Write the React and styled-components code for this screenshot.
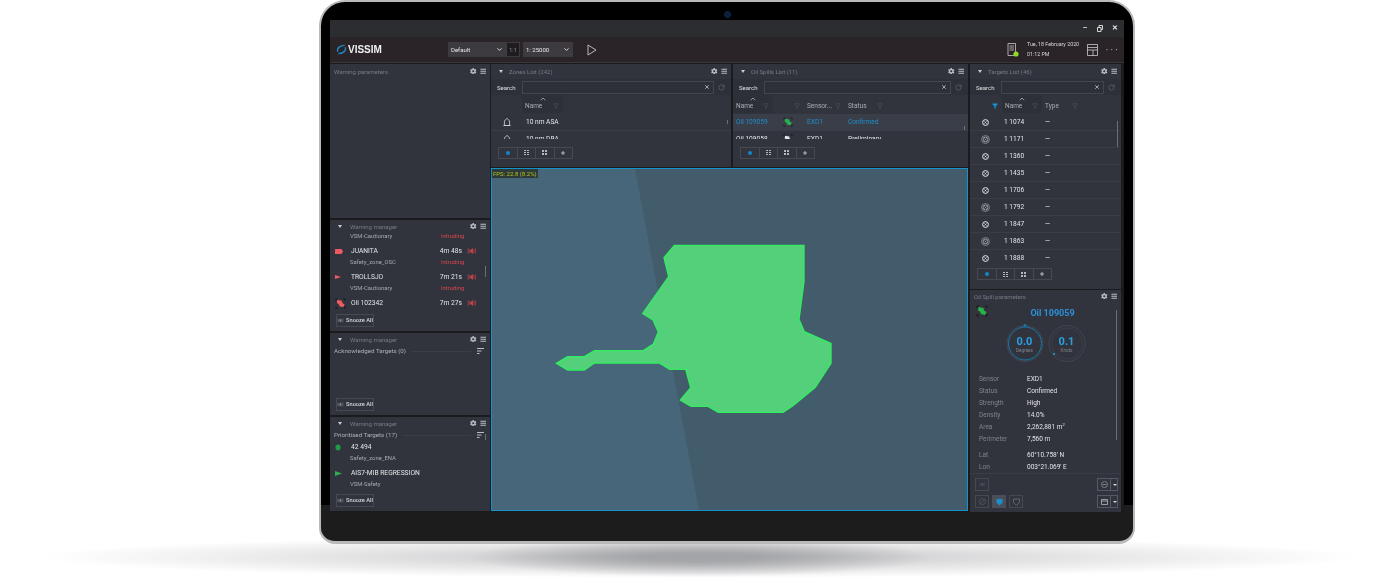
import styled, { createGlobalStyle } from 'styled-components';
import { ChevronDown, ChevronUp, Filter, RotateCw, X } from 'lucide-react';
import { FaBars, FaCog } from 'react-icons/fa';

const Global = createGlobalStyle`
  html, body {
    margin: 0;
    padding: 0;
    background: #fff;
    overflow: hidden;
    font-family: Roboto, "Liberation Sans", sans-serif;
  }
`;

const Page = styled.div`
  position: relative;
  width: 1400px;
  height: 579px;
  overflow: hidden;
`;

const FloorShadow = styled.div`
  position: absolute;
  left: 30px;
  top: 536px;
  width: 1340px;
  height: 42px;
  background:
    radial-gradient(ellipse 230px 20px at 50% 50%, rgba(150, 151, 155, 0.7) 25%, rgba(150, 151, 155, 0) 100%),
    radial-gradient(ellipse 660px 21px at 50% 50%, rgba(170, 171, 174, 0.75) 0%, rgba(190, 190, 193, 0.45) 50%, rgba(255, 255, 255, 0) 100%);
`;

const Tablet = styled.div`
  position: relative;
  box-sizing: border-box;
  width: 816px;
  height: 544px;
  margin-left: 319px;
  padding: 18px 9px 0;
  border: 2px solid #b9babc;
  border-bottom-width: 3px;
  border-radius: 26px 26px 16px 16px;
  background: linear-gradient(#000 0, #000 503px, #1c1c1c 503px);
`;

const Camera = styled.div`
  position: absolute;
  left: 403px;
  top: 9px;
  width: 5px;
  height: 5px;
  border-radius: 50%;
  background: #0c1f3a;
  border: 1px solid #10284c;
`;

const Screen = styled.div`
  width: 794px;
  height: 492px;
  display: flex;
  flex-direction: column;
  background: #1b1b1e;
  color: #e8e8ea;
  font-size: 6.5px;
  filter: blur(0.3px);
  overflow: hidden;
`;

const TitleStrip = styled.div`
  height: 17px;
  flex: none;
  background: #2c2d31;
  display: flex;
  align-items: center;
  justify-content: flex-end;
  gap: 9px;
  padding-right: 6px;
  color: #e6e6e6;
`;

const WinGlyph = styled.span`
  width: 6px;
  display: flex;
  justify-content: center;
  font-size: 7px;
  font-weight: 700;
  line-height: 1;
`;

const Toolbar = styled.div`
  height: 26px;
  flex: none;
  box-sizing: border-box;
  background: #2a2327;
  border-bottom: 1px solid #3a3537;
  display: flex;
  align-items: center;
  padding: 0 6px;
`;

const Logo = styled.div`
  width: 112px;
  display: flex;
  align-items: center;
  gap: 1px;
  font: 700 10px "Liberation Sans", sans-serif;
  color: #f1f1f1;
`;

const SelectBox = styled.div`
  box-sizing: border-box;
  width: ${(p) => p.$w}px;
  height: 15px;
  margin-right: ${(p) => p.$gap || 0}px;
  padding: 0 3px;
  display: flex;
  align-items: center;
  justify-content: space-between;
  background: #3d3a40;
  font-size: 6px;
`;

const RatioBox = styled.div`
  box-sizing: border-box;
  width: 14px;
  height: 15px;
  margin-right: 3px;
  display: flex;
  align-items: center;
  justify-content: center;
  background: #1f1c20;
  border: 1px solid #3d3a40;
  color: #8d8d90;
  font-size: 5.5px;
`;

const ToolbarRight = styled.div`
  margin-left: auto;
  display: flex;
  align-items: center;
`;

const DateText = styled.div`
  width: 60px;
  margin-left: 8px;
  font-size: 5.3px;
  line-height: 9.5px;
  color: #d8d8da;
`;

const Dots = styled.div`
  width: 12px;
  margin-left: 8px;
  font-size: 6px;
  letter-spacing: 0.6px;
  color: #b0b0b2;
  line-height: 1;
  white-space: nowrap;
`;

const Body = styled.div`
  flex: 1;
  min-height: 0;
  display: flex;
  gap: 1px;
  padding-top: 1px;
`;

const LeftColumn = styled.div`
  width: 160px;
  flex: none;
  display: flex;
  flex-direction: column;
  gap: 2px;
`;

const MiddleColumn = styled.div`
  width: 477px;
  flex: none;
  display: flex;
  flex-direction: column;
  gap: 1px;
  padding-bottom: 1px;
`;

const RightColumn = styled.div`
  width: 151px;
  margin-left: 1px;
  flex: none;
  display: flex;
  flex-direction: column;
  gap: 1px;
`;

const ListsRow = styled.div`
  display: flex;
  gap: 2px;
`;

const Panel = styled.section`
  box-sizing: border-box;
  position: relative;
  display: flex;
  flex-direction: column;
  height: ${(p) => p.$h}px;
  width: ${(p) => (p.$w ? `${p.$w}px` : 'auto')};
  background: #31343d;
  overflow: hidden;
`;

const PanelHeader = styled.header`
  height: ${(p) => (p.$compact ? 12 : 14)}px;
  flex: none;
  display: flex;
  align-items: center;
  padding: 0 4px 0 ${(p) => (p.$caret ? 6 : 4)}px;
  color: #777b84;
  font-size: 6px;
`;

const Caret = styled.span`
  width: 0;
  height: 0;
  margin: 0 ${(p) => (p.$wide ? 8 : 6)}px 0 2px;
  border-left: 2.5px solid transparent;
  border-right: 2.5px solid transparent;
  border-top: 3px solid #c9cbd0;
`;

const HeaderTools = styled.div`
  margin-left: auto;
  display: flex;
  align-items: center;
  gap: 3px;
  color: #b9bcc2;
`;

const SearchRow = styled.div`
  height: 16px;
  margin-top: 1px;
  flex: none;
  display: flex;
  align-items: center;
  padding: 0 6px;
  background: #2d3038;
  font-size: 6px;
  color: #dfe0e3;
`;

const SearchLabel = styled.span`
  width: 25px;
  flex: none;
`;

const SearchInput = styled.div`
  flex: 1;
  height: 13px;
  box-sizing: border-box;
  border: 1px solid #42464f;
  display: flex;
  align-items: center;
  justify-content: flex-end;
  padding-right: 3px;
  color: #c9cbd0;
`;

const RefreshWrap = styled.span`
  width: 11px;
  display: flex;
  justify-content: flex-end;
  color: #6d7078;
`;

const ColumnsRow = styled.div`
  height: 18px;
  margin-bottom: 1px;
  flex: none;
  display: flex;
  align-items: stretch;
  color: #a9acb3;
  font-size: 6.5px;
`;

const Column = styled.div`
  position: relative;
  width: ${(p) => p.$w}px;
  flex: none;
  display: flex;
  align-items: center;
  justify-content: space-between;
  box-sizing: border-box;
  padding: 3px 4px 0 3px;
  background: ${(p) => (p.$sorted ? '#2d3037' : 'transparent')};
`;

const SortMark = styled.span`
  position: absolute;
  left: 50%;
  top: 0;
  margin-left: -4px;
  display: flex;
  color: #c4c6cb;
`;

const Rows = styled.div`
  height: ${(p) => p.$h}px;
  flex: none;
  overflow: hidden;
  position: relative;
`;

const Row = styled.div`
  height: 17px;
  box-sizing: border-box;
  display: flex;
  align-items: center;
  border-bottom: 1px solid #3a3d46;
  background: ${(p) => (p.$active ? '#3a3e48' : 'transparent')};
  color: ${(p) => (p.$active ? '#1f8fcf' : '#e4e5e8')};
  font-size: 6.6px;
`;

const Cell = styled.div`
  width: ${(p) => p.$w}px;
  flex: none;
  display: flex;
  align-items: center;
  justify-content: ${(p) => (p.$center ? 'center' : 'flex-start')};
  padding-left: ${(p) => p.$pad || 0}px;
  box-sizing: border-box;
  white-space: nowrap;
`;

const Scrollbar = styled.div`
  position: absolute;
  right: ${(p) => p.$r}px;
  top: ${(p) => p.$t}px;
  width: 1.5px;
  height: ${(p) => p.$h}px;
  background: #6a6e77;
`;

const Tabs = styled.div`
  margin: ${(p) => p.$top}px 0 0 7px;
  display: flex;
  width: max-content;
  border: 1px solid #454952;
`;

const Tab = styled.div`
  width: 17.5px;
  height: 10px;
  display: flex;
  align-items: center;
  justify-content: center;
  border-left: ${(p) => (p.$first ? 'none' : '1px solid #454952')};
`;

const TabDot = styled.span`
  width: 4px;
  height: 4px;
  border-radius: 50%;
  background: #0f86c6;
`;

const MapView = styled.div`
  flex: 1;
  min-height: 0;
  box-sizing: border-box;
  position: relative;
  border: 1px solid #1592c9;
  background: #435c6b;
`;

const MapSvg = styled.svg`
  display: block;
  width: 100%;
  height: 100%;
`;

const Fps = styled.div`
  position: absolute;
  left: 0;
  top: 0;
  padding: 0 1px;
  background: #2c3a3a;
  color: #b6c11c;
  font-size: 6px;
  line-height: 9px;
`;

const WarnList = styled.div`
  position: relative;
  flex: 1;
  min-height: 0;
  overflow: hidden;
  margin-top: ${(p) => p.$pull || 0}px;
  padding: 0 8px 0 5px;
`;

const WarnTitle = styled.div`
  display: flex;
  align-items: center;
  gap: 6px;
  height: 12px;
  margin: 0 -2px -3px -1px;
  color: #aeb1b8;
  font-size: 6.2px;
`;

const TitleLine = styled.span`
  flex: 1;
  height: 1px;
  background: #3a3d46;
`;

const WarnName = styled.div`
  display: flex;
  align-items: center;
  box-sizing: border-box;
  height: 14px;
  padding-top: 4px;
  color: #e4e5e8;
  font-size: 6.7px;
`;

const WarnSub = styled.div`
  display: flex;
  height: 12px;
  align-items: center;
  padding-left: 15px;
  color: #a6a9b0;
  font-size: 5.9px;
`;

const SubText = styled.span`
  width: 91px;
`;

const Intruding = styled.span`
  color: #d9454c;
`;

const WarnIcon = styled.span`
  width: 16px;
  flex: none;
  display: flex;
  align-items: center;
`;

const WarnTime = styled.span`
  margin-left: auto;
  margin-right: 5px;
`;

const SpeakerSlot = styled.span`
  display: flex;
  margin-right: 5px;
`;

const SnoozeFoot = styled.div`
  flex: none;
  padding: 0 0 4.5px 6px;
`;

const Snooze = styled.div`
  box-sizing: border-box;
  width: 38px;
  height: 13px;
  display: flex;
  align-items: center;
  justify-content: center;
  gap: 2px;
  border: 1px solid #454952;
  color: #d6d7da;
  font-size: 5.7px;
  font-weight: 500;
`;

const ParamsHead = styled.div`
  position: relative;
  box-sizing: border-box;
  height: 20px;
  flex: none;
  display: flex;
  align-items: center;
  justify-content: center;
  color: #2b92d8;
  font-size: 9px;
  font-weight: 700;
  padding: 2px 0 0 14px;
`;

const ParamsIcon = styled.span`
  position: absolute;
  left: 6px;
  top: 3px;
`;

const Gauges = styled.div`
  display: flex;
  justify-content: center;
  gap: 4px;
  height: 44px;
  flex: none;
`;

const Gauge = styled.div`
  position: relative;
  width: 38px;
  height: 42px;
`;

const GaugeText = styled.div`
  position: absolute;
  inset: 3px 0 0;
  display: flex;
  flex-direction: column;
  align-items: center;
  justify-content: center;
  color: #28a0e6;
  font-size: 11px;
  font-weight: 700;
  line-height: 11px;
`;

const GaugeLabel = styled.span`
  color: #7f828a;
  font-size: 4.6px;
  font-weight: 400;
  line-height: 7px;
`;

const Facts = styled.dl`
  margin: ${(p) => p.$top}px 0 0;
  padding: 0 0 0 9px;
  flex: none;
  display: grid;
  grid-template-columns: 48px 1fr;
  grid-auto-rows: 12px;
  align-items: center;
  font-size: 6.5px;
`;

const FactRow = styled.div`
  display: contents;
`;

const Key = styled.dt`
  color: #81848c;
`;

const Val = styled.dd`
  margin: 0;
  color: #e3e4e7;
`;

const Sup = styled.sup`
  font-size: 4px;
  line-height: 0;
`;

const ActionBar = styled.div`
  position: absolute;
  left: 0;
  right: 0;
  bottom: 0;
  height: 39px;
  box-sizing: border-box;
  border-top: 1px solid #3a3d46;
  background: #31343d;
  padding: 4px 3px 0 5px;
  display: grid;
  grid-template-columns: 1fr auto;
  grid-template-rows: 13px 13px;
  row-gap: 4px;
`;

const ButtonGroup = styled.div`
  display: flex;
  gap: 3px;
`;

const SquareBtn = styled.div`
  box-sizing: border-box;
  width: 14px;
  height: 13px;
  display: flex;
  align-items: center;
  justify-content: center;
  border: 1px solid ${(p) => (p.$on ? '#4a4e58' : '#454952')};
  background: ${(p) => (p.$on ? '#4a4e58' : 'transparent')};
`;

const SplitBtn = styled.div`
  display: flex;
  box-sizing: border-box;
  width: 21px;
  height: 13px;
  border: 1px solid #555963;
  align-items: center;
`;

const SplitIcon = styled.span`
  width: 12px;
  display: flex;
  justify-content: center;
  border-right: 1px solid #555963;
  height: 100%;
  align-items: center;
`;

const SplitCaret = styled.span`
  width: 0;
  height: 0;
  margin-left: 1.5px;
  border-left: 2px solid transparent;
  border-right: 2px solid transparent;
  border-top: 2.5px solid #d6d7da;
`;

function Speaker({ color = '#d9454c', size = 10 }) {
  return (
    <svg width={size} height={size} viewBox="0 0 10 10" fill="none" stroke={color} strokeWidth="0.6">
      <path d="M4.400 3.800 5.600 2.400v5.200L4.400 6.200H3.800V3.800z" fill={color} />
      <path d="M2.600 3.200v3.600M1.200 2.200v5.600M7 3.200v3.600M8.400 2.200v5.600" />
    </svg>
  );
}

function Target({ faded }) {
  const tone = faded ? '#9a9da3' : '#eceded';
  return (
    <svg width="9" height="9" viewBox="0 0 10 10" fill="none">
      {faded && <circle cx="5" cy="5" r="4.400" stroke={tone} strokeWidth="0.8" />}
      <circle cx="5" cy="5" r={faded ? 2.700 : 3.200} stroke={tone} strokeWidth="1.100" />
      <path d="M3.800 3.800l2.400 2.400M6.200 3.800 3.800 6.200" stroke={tone} strokeWidth="0.8" />
    </svg>
  );
}

function SpillIcon({ color = '#27b34a', size = 11 }) {
  return (
    <svg width={size} height={size} viewBox="0 0 12 12" fill="none">
      <path d="M2.500 2 7.500 3 8 5.500 10.500 7 9 10 5 9 4 6.500 2 5.500z" fill={color} />
      <path d="M1 3V1h2M9 1h2v2M11 9v2H9M3 11H1V9" stroke="#10131a" strokeWidth="0.8" />
    </svg>
  );
}

function ZoneIcon() {
  return (
    <svg width="10" height="10" viewBox="0 0 10 10" fill="none" stroke="#d4d5d8" strokeWidth="0.8">
      <path d="M2.400 8.500V4L5 1.300 7.600 4v4.500zM1.400 8.500h7.200" />
    </svg>
  );
}

function SortLines() {
  return (
    <svg width="7" height="6" viewBox="0 0 7 6" stroke="#b9bcc2">
      <path d="M0 .5h7M0 3h4.500M0 5.500h2.500" />
    </svg>
  );
}

function TabIcons({ top }) {
  return (
    <Tabs $top={top}>
      <Tab $first><TabDot /></Tab>
      <Tab>
        <svg width="5" height="5" viewBox="0 0 5 5"><path d="M0 .5h2M3 .5h2M0 2.500h2M3 2.500h2M0 4.500h2M3 4.500h2" stroke="#b4b6bb" /></svg>
      </Tab>
      <Tab>
        <svg width="5" height="5" viewBox="0 0 5 5"><path d="M0 0h2v2H0zM3 0h2v2H3zM0 3h2v2H0zM3 3h2v2H3z" fill="#b4b6bb" /></svg>
      </Tab>
      <Tab>
        <svg width="4" height="4" viewBox="0 0 4 4"><path d="M2 0v4M0 2h4" stroke="#b4b6bb" /></svg>
      </Tab>
    </Tabs>
  );
}

function PanelTop({ title, caret, compact, wide }) {
  return (
    <PanelHeader $compact={compact} $caret={caret}>
      {caret && <Caret $wide={wide} />}
      {title}
      <HeaderTools>
        <FaCog size={6.500} />
        <FaBars size={6.500} />
      </HeaderTools>
    </PanelHeader>
  );
}

function Search() {
  return (
    <SearchRow>
      <SearchLabel>Search</SearchLabel>
      <SearchInput><X size={6} strokeWidth={3} /></SearchInput>
      <RefreshWrap><RotateCw size={7} /></RefreshWrap>
    </SearchRow>
  );
}

function Col({ w, label, sorted, filterColor = '#565a63' }) {
  return (
    <Column $w={w} $sorted={sorted}>
      {sorted && <SortMark><ChevronUp size={8} /></SortMark>}
      <span>{label}</span>
      <Filter size={6} color={filterColor} />
    </Column>
  );
}

function Warn({ icon, name, time }) {
  return (
    <WarnName>
      <WarnIcon>{icon}</WarnIcon>
      {name}
      {time && <WarnTime>{time}</WarnTime>}
      {time && <SpeakerSlot><Speaker /></SpeakerSlot>}
    </WarnName>
  );
}

function Sub({ text, intruding }) {
  return (
    <WarnSub>
      <SubText>{text}</SubText>
      {intruding && <Intruding>Intruding</Intruding>}
    </WarnSub>
  );
}

function SnoozeAll() {
  return (
    <SnoozeFoot>
      <Snooze><Speaker color="#8d9098" size={7} />Snooze All</Snooze>
    </SnoozeFoot>
  );
}

const VesselRed = (
  <svg width="8" height="5" viewBox="0 0 8 5"><path d="M0 0h6.500L8 2.500 6.500 5H0z" fill="#ef5a60" /></svg>
);
const VesselSmall = (
  <svg width="6" height="4" viewBox="0 0 6 4"><path d="M0 0l6 2-6 2z" fill="#ef5a60" /></svg>
);

const targets = [
  ['1 1074', false], ['1 1171', true], ['1 1360', false], ['1 1435', false], ['1 1706', false],
  ['1 1792', true], ['1 1847', false], ['1 1863', true], ['1 1888', false],
];

const facts = [
  ['Sensor', 'EXD1'], ['Status', 'Confirmed'], ['Strength', 'High'], ['Density', '14.0%'],
  ['Area', <>2,262,881 m<Sup>2</Sup></>], ['Perimeter', '7,560 m'],
];

const position = [['Lat', "60°10.758' N"], ['Lon', "003°21.069' E"]];

function FactList({ rows, top }) {
  return (
    <Facts $top={top}>
      {rows.map(([k, v]) => (
        <FactRow key={k}>
          <Key>{k}</Key>
          <Val>{v}</Val>
        </FactRow>
      ))}
    </Facts>
  );
}

export default function App() {
  return (
    <Page>
      <Global />
      <FloorShadow />
      <Tablet>
        <Camera />
        <Screen>
          <TitleStrip>
            <WinGlyph>–</WinGlyph>
            <WinGlyph>
              <svg width="6" height="7" viewBox="0 0 6 7" fill="none" stroke="#e6e6e6" strokeWidth="0.9">
                <path d="M.5 2.500h3.500v4H.5zM2 2.500V.5h3.500v4H4" />
              </svg>
            </WinGlyph>
            <WinGlyph>✕</WinGlyph>
          </TitleStrip>
          <Toolbar>
            <Logo>
              <svg width="11" height="11" viewBox="0 0 12 12" fill="none" stroke="#1d84bd" strokeWidth="1.600">
                <path d="M2 8.500C.5 5 4 1.500 9.500 1.500M10 3.500C11.500 7 8 10.500 2.500 10.500" />
              </svg>
              VISSIM
            </Logo>
            <SelectBox $w={58}>Default<ChevronDown size={7} strokeWidth={3} /></SelectBox>
            <RatioBox>1:1</RatioBox>
            <SelectBox $w={50} $gap={14}>1: 25000<ChevronDown size={7} strokeWidth={3} /></SelectBox>
            <svg width="10" height="12" viewBox="0 0 10 12" fill="none" stroke="#c9c9cb" strokeWidth="0.9"><path d="M1 1l8 5-8 5z" /></svg>
            <ToolbarRight>
              <svg width="12" height="14" viewBox="0 0 12 14" fill="none">
                <path d="M1 .5h7.500v12H1zM2.500 3h4.500M2.500 5h4.500M2.500 7h4.500" stroke="#c9c9cb" strokeWidth="0.8" />
                <circle cx="9" cy="11" r="2.600" fill="#8fdc28" />
              </svg>
              <DateText>Tue, 18 February 2020<br />01:12 PM</DateText>
              <svg width="11" height="12" viewBox="0 0 11 12" fill="none" stroke="#c9c9cb" strokeWidth="0.8">
                <path d="M.5.500h10v11H.5zM.5 3.500h10M.5 6h10M6 6v5.500" />
              </svg>
              <Dots>• • •</Dots>
            </ToolbarRight>
          </Toolbar>
          <Body>
            <LeftColumn>
              <Panel $h={154}><PanelTop title="Warning parameters" /></Panel>
              <Panel $h={111}>
                <PanelTop title="Warning manager" caret compact wide />
                <WarnList $pull={-2}>
                  <Sub text="VSM-Cautionary" intruding />
                  <Warn icon={VesselRed} name="JUANITA" time="4m 48s" />
                  <Sub text="Safety_zone_OSC" intruding />
                  <Warn icon={VesselSmall} name="TROLLSJO" time="7m 21s" />
                  <Sub text="VSM-Cautionary" intruding />
                  <Warn icon={<SpillIcon color="#ef5a60" />} name="Oil 102342" time="7m 27s" />
                  <Scrollbar $r={4} $t={36} $h={11} />
                </WarnList>
                <SnoozeAll />
              </Panel>
              <Panel $h={82}>
                <PanelTop title="Warning manager" caret compact wide />
                <WarnList>
                  <WarnTitle>Acknowledged Targets (0)<TitleLine /><SortLines /></WarnTitle>
                </WarnList>
                <SnoozeAll />
              </Panel>
              <Panel $h={94}>
                <PanelTop title="Warning manager" caret compact wide />
                <WarnList>
                  <WarnTitle>Prioritised Targets (17)<TitleLine /><SortLines /></WarnTitle>
                  <Warn icon={<svg width="6" height="7" viewBox="0 0 6 7"><ellipse cx="3" cy="3.500" rx="2.500" ry="3" fill="#1f9d45" /></svg>} name="42 494" />
                  <Sub text="Safety_zone_ENA" />
                  <Warn icon={<svg width="7" height="5" viewBox="0 0 7 5"><path d="M0 0l7 2.500L0 5z" fill="#2fae4d" /></svg>} name="AIS7-MIB REGRESSION" />
                  <Sub text="VSM-Safety" />
                  <Scrollbar $r={4} $t={5} $h={6} />
                </WarnList>
                <SnoozeAll />
              </Panel>
            </LeftColumn>

            <MiddleColumn>
              <ListsRow>
                <Panel $h={103} $w={240}>
                  <PanelTop title="Zones List (242)" caret />
                  <Search />
                  <ColumnsRow>
                    <Column $w={31} />
                    <Col w={41} label="Name" sorted />
                  </ColumnsRow>
                  <Rows $h={25}>
                    <Row><Cell $w={32} $center><ZoneIcon /></Cell><Cell $w={100} $pad={3}>10 nm ASA</Cell></Row>
                    <Row><Cell $w={32} $center><ZoneIcon /></Cell><Cell $w={100} $pad={3}>10 nm DBA</Cell></Row>
                    <Scrollbar $r={3} $t={6} $h={4} />
                  </Rows>
                  <TabIcons top={7.500} />
                </Panel>
                <Panel $h={103} $w={235}>
                  <PanelTop title="Oil Spills List (11)" caret />
                  <Search />
                  <ColumnsRow>
                    <Col w={40} label="Name" sorted />
                    <Col w={31} />
                    <Col w={41} label="Sensor..." />
                    <Col w={42} label="Status" />
                  </ColumnsRow>
                  <Rows $h={25}>
                    <Row $active>
                      <Cell $w={50} $pad={3}>Oil 109059</Cell>
                      <Cell $w={24}><SpillIcon size={10} /></Cell>
                      <Cell $w={41}>EXD1</Cell>
                      <Cell $w={60}>Confirmed</Cell>
                    </Row>
                    <Row>
                      <Cell $w={50} $pad={3}>Oil 109058</Cell>
                      <Cell $w={24}><SpillIcon color="#e4e5e8" size={10} /></Cell>
                      <Cell $w={41}>EXD1</Cell>
                      <Cell $w={60}>Preliminary</Cell>
                    </Row>
                    <Scrollbar $r={3} $t={12} $h={4} />
                  </Rows>
                  <TabIcons top={7.500} />
                </Panel>
              </ListsRow>
              <MapView>
                <MapSvg viewBox="6 27 1425 1023" preserveAspectRatio="none">
                  <path d="M6 27H435L627 1050H6z" fill="#47667a" />
                  <path
                    d="M553 256H942V365L927 478 943 515 1023 550V610L976 682 908 738 879 757H685L654 739H603L571 720 602 683 587 628H539L508 609H313L283 630H233L199 610 233 590H283L313 572H460L490 552 505 516 489 480 458 461 536 350 522 293z"
                    fill="#55d07a"
                    stroke="#30ee60"
                    strokeWidth="4"
                  />
                </MapSvg>
                <Fps>FPS: 22.8 (8.2%)</Fps>
              </MapView>
            </MiddleColumn>

            <RightColumn>
              <Panel $h={225}>
                <PanelTop title="Targets List (46)" caret />
                <Search />
                <ColumnsRow>
                  <Column $w={32}><span /><Filter size={6} color="#1c8fd0" fill="#1c8fd0" /></Column>
                  <Col w={40} label="Name" sorted />
                  <Col w={40} label="Type" />
                </ColumnsRow>
                <Rows $h={148}>
                  {targets.map(([id, faded]) => (
                    <Row key={id}>
                      <Cell $w={30} $center><Target faded={faded} /></Cell>
                      <Cell $w={45} $pad={4}>{id}</Cell>
                      <Cell $w={30}>—</Cell>
                    </Row>
                  ))}
                  <Scrollbar $r={3} $t={7} $h={26} />
                </Rows>
                <TabIcons top={6} />
              </Panel>
              <Panel $h={222}>
                <PanelTop title="Oil Spill parameters" compact />
                <ParamsHead>
                  <ParamsIcon><SpillIcon size={12} /></ParamsIcon>
                  Oil 109059
                </ParamsHead>
                <Gauges>
                  <Gauge>
                    <svg width="38" height="42" viewBox="0 0 38 42" fill="none">
                      <circle cx="19" cy="21.500" r="18" stroke="#4a4e58" strokeWidth="0.7" />
                      <circle cx="19" cy="21.500" r="16.500" stroke="#1480b4" strokeWidth="0.9" />
                      <path d="M17 4.500 19 1.500l2 3z" fill="#1480b4" />
                    </svg>
                    <GaugeText>0.0<GaugeLabel>Degrees</GaugeLabel></GaugeText>
                  </Gauge>
                  <Gauge>
                    <svg width="38" height="42" viewBox="0 0 38 42" fill="none">
                      <circle cx="19" cy="21.500" r="18" stroke="#4a4e58" strokeWidth="0.7" />
                      <circle cx="19" cy="21.500" r="15.500" stroke="#40444d" strokeWidth="0.7" />
                      <circle cx="6" cy="32" r="1.100" fill="#1f9fd0" />
                    </svg>
                    <GaugeText>0.1<GaugeLabel>Knots</GaugeLabel></GaugeText>
                  </Gauge>
                </Gauges>
                <FactList rows={facts} top={7} />
                <FactList rows={position} top={4} />
                <Scrollbar $r={4} $t={20} $h={130} />
                <ActionBar>
                  <ButtonGroup>
                    <SquareBtn><Speaker color="#565a63" size={7} /></SquareBtn>
                  </ButtonGroup>
                  <SplitBtn>
                    <SplitIcon><svg width="7" height="7" viewBox="0 0 7 7" fill="none" stroke="#8d9098" strokeWidth="0.8"><circle cx="3.500" cy="3.500" r="3" /><path d="M1.500 3.500h4" /></svg></SplitIcon>
                    <SplitCaret />
                  </SplitBtn>
                  <ButtonGroup>
                    <SquareBtn><svg width="7" height="7" viewBox="0 0 7 7" fill="none" stroke="#565a63" strokeWidth="0.8"><circle cx="3.500" cy="3.500" r="3" /><path d="M1.500 5.500l4-4" /></svg></SquareBtn>
                    <SquareBtn $on><svg width="7" height="8" viewBox="0 0 7 8"><path d="M.5 1h6v3.500L3.500 7.500.5 4.500z" fill="#1b8fc9" /></svg></SquareBtn>
                    <SquareBtn><svg width="7" height="8" viewBox="0 0 7 8" fill="none" stroke="#6d7078" strokeWidth="0.8"><path d="M.5 1h6v3.500L3.500 7.500.5 4.500z" /></svg></SquareBtn>
                  </ButtonGroup>
                  <SplitBtn>
                    <SplitIcon><svg width="7" height="6" viewBox="0 0 7 6" fill="none" stroke="#b4b6bb" strokeWidth="0.8"><path d="M.5.500h6v5h-6zM.5 2h6" /></svg></SplitIcon>
                    <SplitCaret />
                  </SplitBtn>
                </ActionBar>
              </Panel>
            </RightColumn>
          </Body>
        </Screen>
      </Tablet>
    </Page>
  );
}
